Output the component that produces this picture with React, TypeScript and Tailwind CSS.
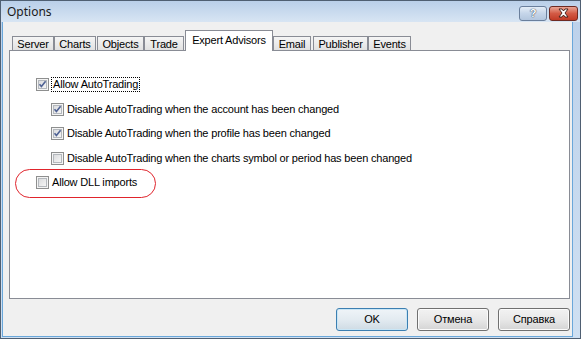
import React from "react";

const Checkbox: React.FC<{ checked?: boolean }> = ({ checked }) => (
  <svg width="13" height="13" viewBox="0 0 13 13" className="shrink-0">
    <defs>
      <linearGradient id="cbfill" x1="0" y1="0" x2="1" y2="1">
        <stop offset="0" stopColor="#d9dadc" />
        <stop offset="1" stopColor="#f7f7f7" />
      </linearGradient>
    </defs>
    <rect x="0.5" y="0.5" width="12" height="12" fill="#f4f4f4" stroke="#8e8f8f" />
    <rect x="2.5" y="2.5" width="8" height="8" fill="url(#cbfill)" stroke="#b4b8bd" />
    {checked && (
      <path
        d="M3.5 6.3 L5.4 8.4 L9.6 3.2"
        fill="none"
        stroke="#4f6294"
        strokeWidth="1.6"
        strokeLinejoin="miter"
      />
    )}
  </svg>
);

const Tab: React.FC<{ label: string; w: string; active?: boolean; ml?: string }> = ({
  label,
  w,
  active,
  ml = "",
}) =>
  active ? (
    <div
      className={`${w} ${ml} h-[21px] -mb-[1px] relative z-10 bg-white border border-b-0 border-[#898c95] flex items-center justify-center pb-[1px]`}
    >
      {label}
    </div>
  ) : (
    <div
      className={`${w} ${ml} h-[14px] bg-gradient-to-b from-[#f5f5f5] to-[#e1e1e1] border border-b-0 border-[#898c95] flex items-center justify-center pt-[1px]`}
    >
      {label}
    </div>
  );

const Button: React.FC<{ label: string; primary?: boolean }> = ({ label, primary }) => (
  <div
    className={`w-[72px] h-[23px] rounded-[3px] border flex items-center justify-center ${
      primary
        ? "border-[#3c7fb1] shadow-[inset_0_0_0_1px_#c9e6f6] bg-gradient-to-b from-[#eff4f8] via-[#e3ebf1] to-[#cfdbe4]"
        : "border-[#707070] shadow-[inset_0_0_0_1px_#fbfbfb] bg-gradient-to-b from-[#f2f2f2] via-[#e8e8e8] to-[#d4d4d4]"
    }`}
  >
    {label}
  </div>
);

export default function App() {
  return (
    <div className="w-[581px] h-[339px] flex flex-col border border-[#4f5f72] bg-gradient-to-b from-[#bcd1ea] to-[#cfe0f2] font-['Liberation_Sans',Arial,sans-serif] text-[11px] tracking-[-0.18px] text-black leading-none overflow-hidden">
      {/* Title bar */}
      <div className="h-[21px] flex items-center pl-[6px] pr-[2px] bg-gradient-to-b from-[#b9cfe9] to-[#d8e5f3]">
        <span className="text-[12px] tracking-normal text-[#1a1a1a] font-['Noto_Sans',sans-serif]">Options</span>
        <div className="ml-auto flex items-start gap-[2px] mt-[3px]">
          <div className="w-[28px] h-[15px] rounded-[3px] border border-[#6a7f9c] bg-gradient-to-b from-[#e4edf7] via-[#c5d5e9] to-[#b3c6de] flex items-center justify-center">
            <span className="text-[11px] font-bold text-white [text-shadow:0_0_1px_#2b3b55,0_0_1px_#2b3b55]">?</span>
          </div>
          <div className="w-[29px] h-[15px] rounded-[3px] border border-[#6e2a22] bg-gradient-to-b from-[#e8a494] via-[#d35a45] to-[#c13a25] flex items-center justify-center">
            <svg width="13" height="10" viewBox="0 0 13 10">
              <path
                d="M2 1 L5 1 L6.5 3 L8 1 L11 1 L8 5 L11 9 L8 9 L6.5 7 L5 9 L2 9 L5 5 Z"
                fill="#ffffff"
                stroke="#3b1a15"
                strokeWidth="0.9"
                strokeLinejoin="round"
              />
            </svg>
          </div>
        </div>
      </div>

      {/* Body */}
      <div className="flex-1 ml-[1px] mr-[7px] mb-[1px] bg-[#f0f0f0] border-l border-r border-b border-[#6aa7da] flex flex-col">
        {/* Tabs */}
        <div className="h-[20px] mt-[8px] pl-[9px] flex items-end">
          <Tab label="Server" w="w-[42px]" />
          <Tab label="Charts" w="w-[42px]" />
          <Tab label="Objects" w="w-[47px]" ml="ml-[1px]" />
          <Tab label="Trade" w="w-[40px]" />
          <Tab label="Expert Advisors" w="w-[88px]" ml="ml-[1px]" active />
          <Tab label="Email" w="w-[38px]" />
          <Tab label="Publisher" w="w-[55px]" ml="ml-[2px]" />
          <Tab label="Events" w="w-[43px]" />
        </div>

        {/* Panel */}
        <div className="ml-[6px] mr-[2px] h-[249px] bg-white border border-[#898c95] relative flex flex-col pt-[27px] pl-[26px]">
          <div className="h-[13px] flex items-center">
            <Checkbox checked />
            <span className="ml-[2px] px-[1px] h-[15px] flex items-center border border-dotted border-black">
              Allow AutoTrading
            </span>
          </div>
          <div className="h-[13px] mt-[12px] ml-[15px] flex items-center gap-[3px]">
            <Checkbox checked />
            <span>Disable AutoTrading when the account has been changed</span>
          </div>
          <div className="h-[13px] mt-[11px] ml-[15px] flex items-center gap-[3px]">
            <Checkbox checked />
            <span>Disable AutoTrading when the profile has been changed</span>
          </div>
          <div className="h-[13px] mt-[12px] ml-[15px] flex items-center gap-[3px]">
            <Checkbox />
            <span>Disable AutoTrading when the charts symbol or period has been changed</span>
          </div>
          <div className="h-[13px] mt-[11px] flex items-center gap-[3px]">
            <Checkbox />
            <span>Allow DLL imports</span>
          </div>

          {/* red annotation */}
          <div className="absolute left-[5px] top-[118px] w-[141px] h-[29px] rounded-full border-[1.5px] border-[#e0242c]" />
        </div>

        {/* Buttons */}
        <div className="mt-[9px] pr-[2px] flex justify-end gap-[9px]">
          <Button label="OK" primary />
          <Button label="Отмена" />
          <Button label="Справка" />
        </div>
      </div>
    </div>
  );
}
